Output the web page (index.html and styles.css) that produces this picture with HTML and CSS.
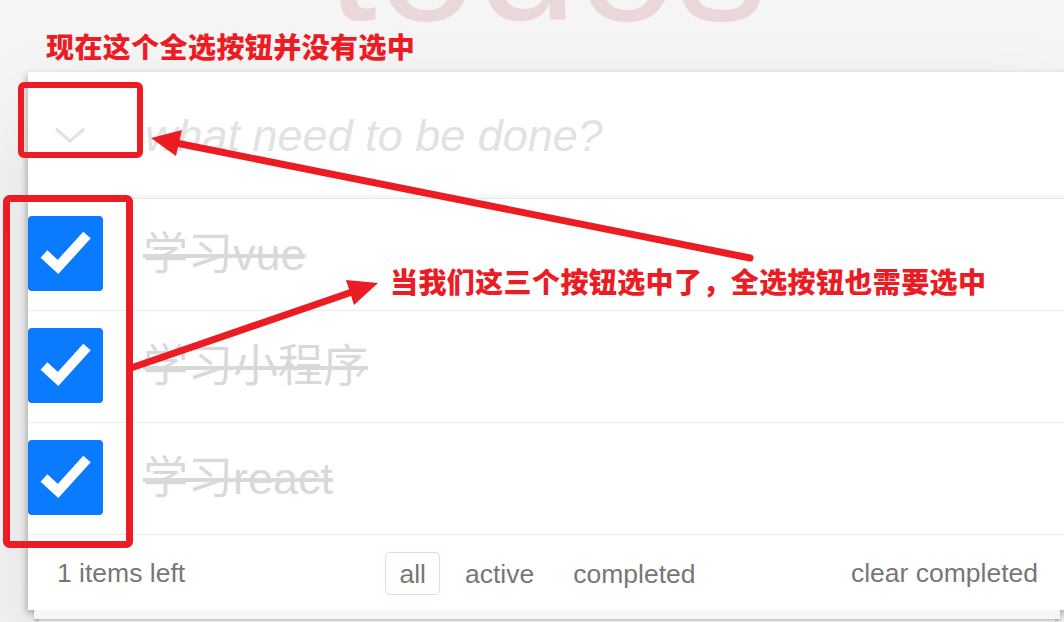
FILE: index.html
```html
<!DOCTYPE html>
<html lang="zh-CN">
<head>
<meta charset="utf-8">
<title>todos</title>
<link rel="stylesheet" href="styles.css">
</head>
<body>
<div class="app">
  <h1 class="title">todos</h1>
  <section class="panel">
    <header class="new-row">
      <span class="toggle-all">
        <svg width="34" height="20" viewBox="0 0 34 20"><polyline points="3,4 17,16 31,4" fill="none" stroke="#e3e3e3" stroke-width="3.5"/></svg>
      </span>
      <span class="placeholder">what need to be done?</span>
    </header>
    <ul class="list">
      <li class="todo">
        <span class="check"><svg width="75" height="75" viewBox="0 0 75 75"><polyline points="16,38 30,51 59,19" fill="none" stroke="#fff" stroke-width="10"/></svg></span>
        <span class="label">学习vue</span>
      </li>
      <li class="todo">
        <span class="check"><svg width="75" height="75" viewBox="0 0 75 75"><polyline points="16,38 30,51 59,19" fill="none" stroke="#fff" stroke-width="10"/></svg></span>
        <span class="label">学习小程序</span>
      </li>
      <li class="todo">
        <span class="check"><svg width="75" height="75" viewBox="0 0 75 75"><polyline points="16,38 30,51 59,19" fill="none" stroke="#fff" stroke-width="10"/></svg></span>
        <span class="label">学习react</span>
      </li>
    </ul>
    <footer class="footer">
      <span class="count">1 items left</span>
      <ul class="filters">
        <li><a class="filter selected">all</a></li>
        <li><a class="filter">active</a></li>
        <li><a class="filter">completed</a></li>
      </ul>
      <span class="clear">clear completed</span>
    </footer>
  </section>
</div>
<div class="notes">
  <svg class="marks" width="1064" height="622" viewBox="0 0 1064 622">
    <rect x="21" y="85" width="119" height="70" rx="3" fill="none" stroke="#ec1c24" stroke-width="6"/>
    <rect x="6.5" y="198.5" width="123" height="346" rx="3" fill="none" stroke="#ec1c24" stroke-width="7"/>
    <line x1="750" y1="258" x2="176" y2="143" stroke="#ec1c24" stroke-width="7" stroke-linecap="round"/>
    <polygon points="151,138 182,130 176,156" fill="#ec1c24"/>
    <line x1="128" y1="369" x2="355" y2="291" stroke="#ec1c24" stroke-width="7"/>
    <polygon points="378,283 346,280 354,305" fill="#ec1c24"/>
  </svg>
  <p class="note note-top">现在这个全选按钮并没有选中</p>
  <p class="note note-mid">当我们这三个按钮选中了，全选按钮也需要选中</p>
</div>
</body>
</html>
```

FILE: styles.css
```css
html, body {
  margin: 0;
  padding: 0;
}

body {
  width: 1064px;
  height: 622px;
  position: relative;
  overflow: hidden;
  background: #f5f5f5;
  font-family: "Liberation Sans", "Noto Sans CJK SC", sans-serif;
}

.app {
  display: flex;
  flex-direction: column;
  padding-left: 28px;
  width: 1038px;
}

.title {
  margin: -107px 0 49px;
  height: 130px;
  font-size: 180px;
  line-height: 130px;
  font-weight: 400;
  text-align: center;
  color: rgba(175, 47, 47, 0.15);
}

.panel {
  background: #fff;
  box-shadow:
    0 15px 0 -6px #f6f6f6,
    0 17px 2px -6px rgba(0, 0, 0, 0.2),
    0 30px 0 -11px #f6f6f6,
    0 32px 4px -11px rgba(0, 0, 0, 0.2),
    -2px 2px 6px 0 rgba(0, 0, 0, 0.12),
    0 4px 8px 0 rgba(0, 0, 0, 0.2),
    0 47px 94px 0 rgba(0, 0, 0, 0.1);
}

.new-row {
  height: 126px;
  display: flex;
  align-items: center;
  box-shadow: inset 0 -4px 2px rgba(0, 0, 0, 0.03);
}

.toggle-all {
  width: 117px;
  box-sizing: border-box;
  padding-left: 25px;
  display: flex;
  align-items: center;
  flex: none;
}

.toggle-all svg {
  display: block;
}

.placeholder {
  font-size: 45px;
  line-height: 63px;
  font-style: italic;
  color: #e2e2e2;
  white-space: nowrap;
}

.list {
  list-style: none;
  margin: 0;
  padding: 0;
  border-top: 1px solid #e6e6e6;
}

.todo {
  height: 111px;
  display: flex;
  align-items: center;
  border-bottom: 1px solid #ededed;
}

.check {
  width: 75px;
  height: 75px;
  margin-top: -3px;
  flex: none;
  background: #0a7bff;
  border-radius: 4px;
}

.check svg {
  display: block;
}

.label {
  margin-left: 40px;
  font-size: 45px;
  line-height: 54px;
  color: #d9d9d9;
  text-decoration: line-through;
  white-space: nowrap;
}

.footer {
  height: 75px;
  box-sizing: border-box;
  padding: 2px 28px 0 29px;
  display: grid;
  grid-template-columns: 1fr auto 1fr;
  align-items: center;
  font-size: 26.5px;
  color: #777;
}

.count {
  justify-self: start;
}

.clear {
  justify-self: end;
}

.filters {
  list-style: none;
  margin: 0;
  padding: 0;
  display: flex;
}

.filter {
  display: block;
  margin: 0 5.5px;
  padding: 5.5px 13px;
  line-height: 30px;
  border: 1px solid transparent;
  border-radius: 5px;
  color: #777;
}

.filter.selected {
  border-color: rgba(175, 47, 47, 0.2);
}

.notes {
  position: absolute;
  left: 0;
  top: 0;
  width: 1064px;
  height: 622px;
  pointer-events: none;
}

.marks {
  position: absolute;
  left: 0;
  top: 0;
}

.note {
  position: absolute;
  margin: 0;
  font-family: "Noto Sans CJK SC", sans-serif;
  font-weight: 900;
  font-size: 28px;
  line-height: 28px;
  letter-spacing: 0.4px;
  color: #ec1c24;
  white-space: nowrap;
}

.note-top {
  left: 46px;
  top: 32px;
}

.note-mid {
  left: 390px;
  top: 267px;
}
```
